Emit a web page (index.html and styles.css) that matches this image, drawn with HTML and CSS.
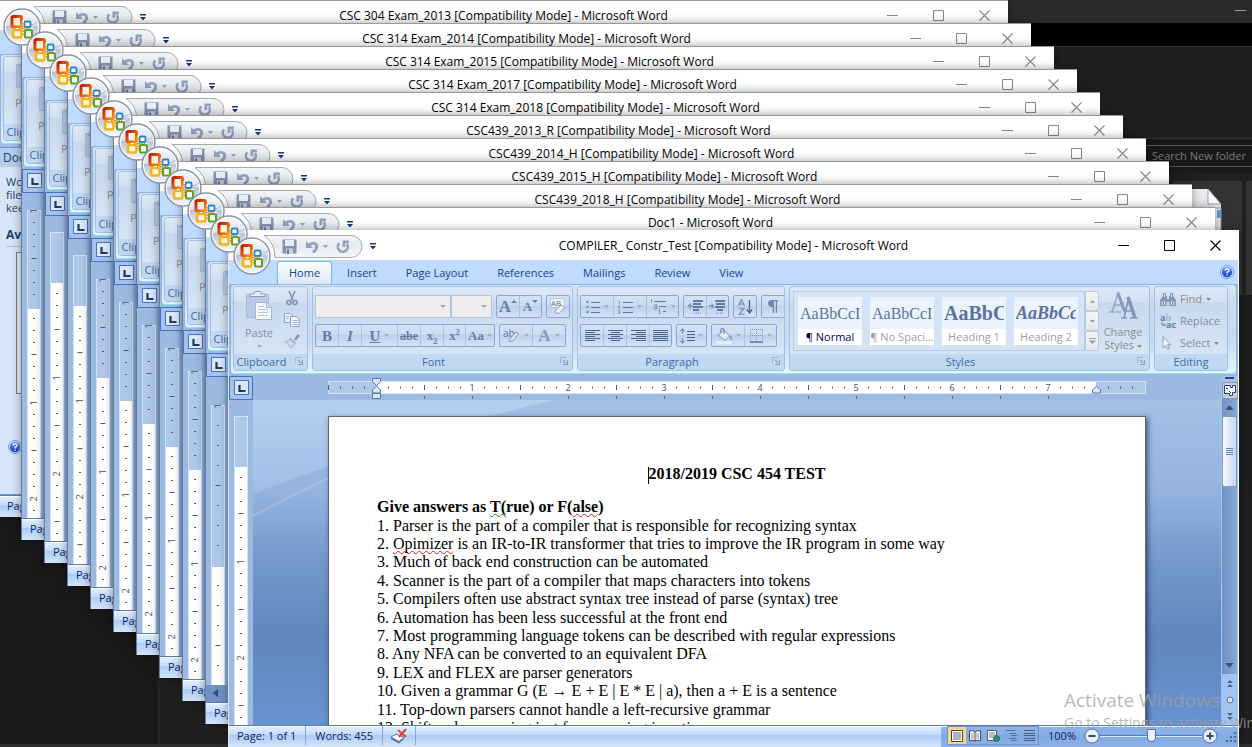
FILE: index.html
```html
<!DOCTYPE html>
<html lang="en">
<head>
<meta charset="utf-8">
<title>Microsoft Word</title>
<link rel="stylesheet" href="styles.css">
</head>
<body>
<svg class="defs" aria-hidden="true">
  <defs>
    <linearGradient id="g-orb" x1="0" y1="0" x2="0" y2="1">
      <stop offset="0" stop-color="#fafbfd"/><stop offset=".45" stop-color="#dde2ec"/>
      <stop offset=".5" stop-color="#bcc5d6"/><stop offset="1" stop-color="#fbfcff"/>
    </linearGradient>
    <linearGradient id="g-red" x1="0" y1="0" x2="1" y2="1">
      <stop offset="0" stop-color="#c01a00"/><stop offset="1" stop-color="#ff9a10"/>
    </linearGradient>
    <linearGradient id="g-pill" x1="0" y1="0" x2="0" y2="1">
      <stop offset="0" stop-color="#f1f4f7"/><stop offset=".5" stop-color="#e6ebf0"/><stop offset="1" stop-color="#f4f7fa"/>
    </linearGradient>
    <linearGradient id="g-help" x1="0" y1="0" x2="0" y2="1">
      <stop offset="0" stop-color="#5c95ff"/><stop offset="1" stop-color="#1238c0"/>
    </linearGradient>
    <symbol id="orb" viewBox="0 0 38 38">
      <circle cx="19" cy="19" r="18" fill="url(#g-orb)" stroke="#8b93a5" stroke-width="1.4"/>
      <circle cx="19" cy="19" r="16.6" fill="none" stroke="#fff" stroke-width="1"/>
      <path d="M3 20q8-5 16-3t16-3" fill="none" stroke="#a9b4c8" stroke-width=".8"/>
      <rect x="9" y="8.500" width="9.500" height="10.500" rx="1.500" fill="#fbeee6" stroke="url(#g-red)" stroke-width="3"/>
      <rect x="21.500" y="13.500" width="6" height="5.500" rx="1.200" fill="#fff" stroke="#1f86cf" stroke-width="1.800"/>
      <rect x="10" y="22" width="8.500" height="7.500" rx="1.500" fill="#fff6dc" stroke="#f5b21a" stroke-width="2.600"/>
      <rect x="22" y="22" width="7" height="7.500" rx="1.500" fill="#fff" stroke="#5fa22a" stroke-width="2.200"/>
      <path d="M20.200 12v19M13 20.500h17" stroke="#fff" stroke-width="1.200"/>
      <path d="M20.200 15v13M16 20.500h11" stroke="#e0872e" stroke-width="1.400" stroke-dasharray="1.500 1"/>
    </symbol>
    <symbol id="pill" viewBox="0 0 102 23">
      <path d="M3 .5H90a11 11 0 0 1 0 22H14Q14 8 3 .5z" fill="url(#g-pill)" stroke="#a9a9a9"/>
    </symbol>
    <symbol id="save" viewBox="0 0 15 15">
      <path d="M.5.5h14v14h-14z" fill="#8592b0"/><path d="M3 1h9v6H3z" fill="#e9eef6"/>
      <path d="M4 9.500h7V15H4z" fill="#c9d3e4"/><path d="M5 10.500h2V15H5z" fill="#65739a"/>
    </symbol>
    <symbol id="undo" viewBox="0 0 14 14">
      <path d="M1 1v7h7L5.700 5.800Q8.200 3.500 9.700 5.200 11.300 8 7 11.300l1.800 2Q14.800 9 12.600 4.200 9.500.2 3.400 3.500z" fill="#93a0bd"/>
    </symbol>
    <symbol id="redo" viewBox="0 0 14 14">
      <path d="M3.200 3.300A5 5 0 1 0 11 4" fill="none" stroke="#93a0bd" stroke-width="2.600"/><path d="M6.500.6h6.400v2.600H9.200V7H6.500z" fill="#93a0bd"/>
    </symbol>
    <symbol id="down" viewBox="0 0 5 3"><path d="M0 0h5L2.500 3z" fill="currentColor"/></symbol>
    <symbol id="custom" viewBox="0 0 6 7"><path d="M0 0h6v1.500H0zM0 3h6L3 6.500z" fill="#173a84"/></symbol>
    <symbol id="min" viewBox="0 0 11 11"><path d="M0 5.500h11" stroke="currentColor"/></symbol>
    <symbol id="max" viewBox="0 0 11 11"><path d="M.5.5h10v10H.5z" fill="none" stroke="currentColor"/></symbol>
    <symbol id="close" viewBox="0 0 11 11"><path d="M.5.5l10 10M10.500.5l-10 10" stroke="currentColor" stroke-width="1.100"/></symbol>
    <symbol id="help" viewBox="0 0 14 14">
      <circle cx="7" cy="7" r="6.500" fill="#e8f1ff" stroke="#6f95c8"/><circle cx="7" cy="7" r="5.200" fill="url(#g-help)"/>
      <path d="M5 5.600Q5.200 3.800 7 3.800t2 1.600Q9 6.400 7.100 7.300v1.200M7.100 9.600v1.200" fill="none" stroke="#fff" stroke-width="1.400"/>
    </symbol>
    <symbol id="paste" viewBox="0 0 28 30">
      <path d="M1.500 3.500h22v23h-22z" fill="#b9cae6" stroke="#a9bbd8"/><path d="M5 5.500h15V3h-4l-1-2.500h-5L9 3H5z" fill="#e6eef8" stroke="#8b9dbd"/>
      <path d="M10.500 11.500h11l5 5v12h-16z" fill="#f4f8fd" stroke="#a3b4d0"/><path d="M21.500 11.500v5h5" fill="#d4dfef" stroke="#a3b4d0"/>
      <path d="M13 15.500h6M13 18.500h10M13 21.500h10M13 24.500h10" stroke="#b4c6e2"/>
    </symbol>
    <symbol id="launch" viewBox="0 0 8 8"><path d="M.5 6V.5H6" fill="none" stroke="#9fb4d2"/><path d="M3 3l3 3M7.500 3v4.500H3" fill="none" stroke="#87a0c6" stroke-width="1.200"/></symbol>
    <symbol id="tabstop" viewBox="0 0 24 24">
      <path d="M.5.5h23v23H.5z" fill="#a6c2ea" stroke="#4472c4"/><path d="M5.500 4.500h14v14h-14z" fill="#dbe8fa" stroke="#4472c4"/>
      <path d="M10.500 9v6h6" fill="none" stroke="#22385c" stroke-width="2.200"/>
    </symbol>
  </defs>
</svg>

<div class="explorer">
  <div class="ex-title"><svg width="11" height="11"><use href="#min"/></svg></div>
  <div class="ex-black"></div>
  <div class="ex-ribbon"></div>
  <div class="ex-search"><div class="ex-box">Search New folder</div></div>
  <div class="ex-body">
    <div class="ex-side"></div>
    <div class="ex-main"><div class="ex-tile">
      <svg width="42" height="60" viewBox="0 0 42 60"><path d="M0 1h28l13 16v43H0z" fill="#e9ebf0"/><path d="M28 1v15h13z" fill="#fff" stroke="#9a9da5"/><path d="M30 20h11v40" fill="none" stroke="#8d96a8"/><path d="M37 22h4v8h-4z" fill="#58a5e0"/></svg>
    </div><div class="ex-tile2"></div></div>
  </div>
</div>

<main class="desktop" id="desktop">
  <template id="back">
    <section class="window back">
      <header class="titlebar">
        <svg class="orb" width="38" height="38"><use href="#orb"/></svg>
        <div class="qat"><svg class="pill" width="102" height="23"><use href="#pill"/></svg>
          <svg width="15" height="15"><use href="#save"/></svg><svg width="14" height="14"><use href="#undo"/></svg>
          <svg class="tri" width="5" height="3"><use href="#down"/></svg><svg width="14" height="14"><use href="#redo"/></svg>
          <svg class="cust" width="6" height="7"><use href="#custom"/></svg></div>
        <h2 class="caption"></h2>
        <div class="winbtns"><svg width="11" height="11"><use href="#min"/></svg><svg width="11" height="11"><use href="#max"/></svg><svg width="11" height="11"><use href="#close"/></svg></div>
      </header>
      <div class="tabs"></div>
      <div class="ribbon"><div class="group clipboard"><div class="gbody">
        <span class="big"><svg width="28" height="30"><use href="#paste"/></svg>Paste</span></div><div class="glabel launch">Clipboard</div></div></div>
      <div class="work"><div class="vcol"><svg width="24" height="24"><use href="#tabstop"/></svg><div class="vruler"></div></div></div>
      <footer class="status"><span>Page: 1 of 1</span></footer>
    </section>
  </template>

  <section class="window front">
    <header class="titlebar">
      <button class="orb" aria-label="Office Button"><svg width="38" height="38"><use href="#orb"/></svg></button>
      <div class="qat"><svg class="pill" width="102" height="23"><use href="#pill"/></svg>
        <button aria-label="Save"><svg width="15" height="15"><use href="#save"/></svg></button>
        <button aria-label="Undo"><svg width="14" height="14"><use href="#undo"/></svg></button>
        <button class="tri" aria-label="Undo list"><svg width="5" height="3"><use href="#down"/></svg></button>
        <button aria-label="Repeat"><svg width="14" height="14"><use href="#redo"/></svg></button>
        <button class="cust" aria-label="Customize"><svg width="6" height="7"><use href="#custom"/></svg></button></div>
      <h1 class="caption">COMPILER_ Constr_Test [Compatibility Mode] - Microsoft Word</h1>
      <div class="winbtns"><button aria-label="Minimize"><svg width="11" height="11"><use href="#min"/></svg></button><button aria-label="Maximize"><svg width="11" height="11"><use href="#max"/></svg></button><button aria-label="Close"><svg width="11" height="11"><use href="#close"/></svg></button></div>
    </header>
    <nav class="tabs">
      <button class="tab active">Home</button><button class="tab">Insert</button><button class="tab">Page Layout</button><button class="tab">References</button><button class="tab">Mailings</button><button class="tab">Review</button><button class="tab">View</button>
      <button class="helpbtn" aria-label="Help"><svg width="14" height="14"><use href="#help"/></svg></button>
    </nav>

    <div class="ribbon">
      <div class="group clipboard"><div class="gbody">
        <button class="big"><svg width="28" height="30"><use href="#paste"/></svg>Paste<svg class="arr" width="5" height="3"><use href="#down"/></svg></button>
        <div class="minis">
          <button aria-label="Cut"><svg width="12" height="15" viewBox="0 0 12 15"><path d="M3 0l4 9M9 0L5 9" stroke="#7f90b2" stroke-width="1.500"/><circle cx="3" cy="11.500" r="2" fill="none" stroke="#7f90b2" stroke-width="1.600"/><circle cx="9" cy="11.500" r="2" fill="none" stroke="#7f90b2" stroke-width="1.600"/></svg></button>
          <button aria-label="Copy"><svg width="16" height="14" viewBox="0 0 16 14"><path d="M.5.5h6l2 2v7h-8z" fill="#eaf1fa" stroke="#8fa2c4"/><path d="M6.500 3.500h6l2.500 2.500v7.500H6.500z" fill="#f4f8fd" stroke="#8fa2c4"/><path d="M2 3.500h3M2 5.500h3M8.500 7.500h5M8.500 9.500h5M8.500 11.500h5" stroke="#a5b7d6"/></svg></button>
          <button aria-label="Format Painter"><svg width="15" height="14" viewBox="0 0 15 14"><path d="M9 5l4-5 2 2-4 4.500z" fill="#8496b8"/><path d="M5 3.500l6.500 5-1.500 1.500-6-5z" fill="#a8b7d2"/><path d="M0 8q3 0 4.500-3l5.500 4.500q-1 3-4 4.500Q4 11 0 8z" fill="#c9d5e8" stroke="#93a5c4" stroke-width=".7"/></svg></button>
        </div></div>
        <div class="glabel launch">Clipboard<button aria-label="Clipboard options"><svg width="8" height="8"><use href="#launch"/></svg></button></div></div>

      <div class="group font"><div class="gbody rows">
        <div class="row">
          <div class="combos"><div class="combo wide"><select aria-label="Font" disabled></select></div><div class="combo"><select aria-label="Font Size" disabled></select></div></div>
          <div class="seg"><button class="w22 serif" aria-label="Grow Font"><b class="f16">A</b><i class="up"></i></button><button class="w22 serif" aria-label="Shrink Font"><b class="f13">A</b><i class="dn"></i></button></div>
          <div class="seg"><button class="w22" aria-label="Clear Formatting"><svg width="17" height="17" viewBox="0 0 17 17"><rect x=".5" y=".5" width="14" height="9" fill="#eef3fa" stroke="#b8c7df"/><text x="1" y="8" font-size="8" fill="#5f7095" font-family="Open Sans">AB</text><path d="M5 13l6-6 4 2.500-6 6q-4 0-4-2.500z" fill="#eaf0f8" stroke="#8b9cbc"/></svg></button></div>
        </div>
        <div class="row">
          <div class="seg"><button class="w22 serif"><b class="f14">B</b></button><button class="w24 serif"><em class="f14">I</em></button><button class="w40 serif"><u class="f14">U</u><svg width="5" height="3"><use href="#down"/></svg></button><button class="w24 serif"><s class="f12">abe</s></button><button class="w24 serif"><b class="f13">x<sub>2</sub></b></button><button class="w22 serif"><b class="f13">x<sup>2</sup></b></button><button class="w28 serif"><b class="f13">Aa</b><svg width="5" height="3"><use href="#down"/></svg></button></div>
          <div class="seg"><button class="w32" aria-label="Highlight"><svg width="17" height="14" viewBox="0 0 17 14"><text x="0" y="8" font-size="10" fill="#5f7095" font-family="Open Sans">ab</text><path d="M6 11l7-8 2.500 1.500L10 12l-3.500.5z" fill="#dfe8f5" stroke="#8192b3"/></svg><svg width="5" height="3"><use href="#down"/></svg></button><button class="w34 serif" aria-label="Font Color"><b class="f16 soft">A</b><svg width="5" height="3"><use href="#down"/></svg></button></div>
        </div></div>
        <div class="glabel launch">Font<button aria-label="Font options"><svg width="8" height="8"><use href="#launch"/></svg></button></div></div>

      <div class="group para"><div class="gbody rows">
        <div class="row">
          <div class="seg"><button class="w32" aria-label="Bullets"><svg width="14" height="14" viewBox="0 0 14 14"><path d="M5 2.500h9M5 7.500h9M5 12.500h9" stroke="#5f75a0"/><circle cx="1.500" cy="2" r="1.300" fill="#7d8fb2"/><circle cx="1.500" cy="7" r="1.300" fill="#7d8fb2"/><circle cx="1.500" cy="12" r="1.300" fill="#7d8fb2"/></svg><svg width="5" height="3"><use href="#down"/></svg></button><button class="w34" aria-label="Numbering"><svg width="15" height="14" viewBox="0 0 15 14"><path d="M5 2.500h10M5 7.500h10M5 12.500h10" stroke="#5f75a0"/><path d="M.5 1h1v3M0 6h2L.5 8.500H2M0 10.500h2v3H0M.5 12H2" fill="none" stroke="#7d8fb2" stroke-width=".8"/></svg><svg width="5" height="3"><use href="#down"/></svg></button><button class="w32" aria-label="Multilevel List"><svg width="17" height="16" viewBox="0 0 17 16"><path d="M4 2.500h12M9 7.500h7M13 12.500h3" stroke="#5f75a0"/><path d="M1.500 0v4M4 6h3v4H4V8h3M9.500 11v4M9.500 9.500v.8" fill="none" stroke="#7d8fb2"/></svg><svg width="5" height="3"><use href="#down"/></svg></button></div>
          <div class="seg"><button class="w22" aria-label="Decrease Indent"><svg width="17" height="14" viewBox="0 0 17 14"><path d="M6 1h10M6 4h8M6 7h10M6 10h6" stroke="#3f5a8c" stroke-width="1.500"/><path d="M7 13h8" stroke="#6b80a8" stroke-dasharray="1 1"/><path d="M0 6l4-3.500v2.500h2v2H4v2.500z" fill="#8b9cbc"/></svg></button><button class="w22" aria-label="Increase Indent"><svg width="17" height="14" viewBox="0 0 17 14"><path d="M6 1h10M7 4h9M6 7h10M8 10h6" stroke="#3f5a8c" stroke-width="1.500"/><path d="M7 13h8" stroke="#6b80a8" stroke-dasharray="1 1"/><path d="M5.500 6l-3-3.500v2.500H0v2h2.500v2.500z" fill="#8b9cbc"/></svg></button></div>
          <div class="seg"><button class="w22" aria-label="Sort"><svg width="15" height="16" viewBox="0 0 15 16"><path d="M.5 7L3.500.5 6.500 7M1.500 5h4M1 9.500h5L1 15.500h5.500" fill="none" stroke="#8496b8" stroke-width="1.300"/><path d="M11.500 1v12M9 10.500l2.500 3.500 2.500-3.500" fill="none" stroke="#4b628f" stroke-width="1.300"/></svg></button></div>
          <div class="seg"><button class="w22" aria-label="Show marks"><svg width="12" height="13" viewBox="0 0 12 13"><path d="M5 0h6v1.200h-1V13H8.800V1.200H7V13H5.800V7Q1 7 1 3.500T5 0z" fill="#6f82a8"/></svg></button></div>
        </div>
        <div class="row">
          <div class="seg"><button class="w22" aria-label="Align Left"><svg width="15" height="12" viewBox="0 0 15 12"><path d="M0 .5h15M0 2.500h10M0 4.500h15M0 6.500h10M0 8.500h15M0 10.500h10" stroke="#4b628f"/></svg></button><button class="w24" aria-label="Center"><svg width="15" height="12" viewBox="0 0 15 12"><path d="M0 .5h15M3 2.500h9M0 4.500h15M3 6.500h9M0 8.500h15M3 10.500h9" stroke="#4b628f"/></svg></button><button class="w24" aria-label="Align Right"><svg width="15" height="12" viewBox="0 0 15 12"><path d="M0 .5h15M5 2.500h10M0 4.500h15M5 6.500h10M0 8.500h15M5 10.500h10" stroke="#4b628f"/></svg></button><button class="w22" aria-label="Justify"><svg width="15" height="12" viewBox="0 0 15 12"><path d="M0 .5h15M0 2.500h15M0 4.500h15M0 6.500h15M0 8.500h15M0 10.500h15" stroke="#4b628f"/></svg></button></div>
          <div class="seg"><button class="w28" aria-label="Line Spacing"><svg width="15" height="16" viewBox="0 0 15 16"><path d="M7 3.500h8M7 6.500h8M7 9.500h8M7 12.500h8" stroke="#4b628f"/><path d="M2.500 1v5M2.500 10v5M.5 3l2-2 2 2M.5 13l2 2 2-2" fill="none" stroke="#8092b5" stroke-width="1.300"/></svg><svg width="5" height="3"><use href="#down"/></svg></button></div>
          <div class="seg"><button class="w32" aria-label="Shading"><svg width="16" height="16" viewBox="0 0 16 16"><path d="M2 7l6-5 6 6-5 4.500z" fill="#dfe8f4" stroke="#7f91b3"/><path d="M5 5V1q2-1.500 3 1v4M14 8q2 1 1 4" fill="none" stroke="#7f91b3" stroke-width="1.300"/><path d="M0 13h16v3H0z" fill="#e6edf7"/></svg><svg width="5" height="3"><use href="#down"/></svg></button><button class="w32" aria-label="Borders"><svg width="13" height="14" viewBox="0 0 13 14"><path d="M.5 0v13M6.500 0v13M12.500 0v13M0 .5h13M0 6.500h13" stroke="#7f91b3" stroke-dasharray="1 1"/><path d="M0 13h13" stroke="#5f75a0" stroke-width="1.500"/></svg><svg width="5" height="3"><use href="#down"/></svg></button></div>
        </div></div>
        <div class="glabel launch">Paragraph<button aria-label="Paragraph options"><svg width="8" height="8"><use href="#launch"/></svg></button></div></div>

      <div class="group styles"><div class="gbody">
        <div class="gallery">
          <button class="style"><span class="sample">AaBbCcI</span><span class="sname on">¶ Normal</span></button>
          <button class="style"><span class="sample">AaBbCcI</span><span class="sname">¶ No Spaci...</span></button>
          <button class="style"><span class="sample h1">AaBbC</span><span class="sname">Heading 1</span></button>
          <button class="style"><span class="sample h2">AaBbCc</span><span class="sname">Heading 2</span></button>
        </div>
        <div class="gscroll"><button aria-label="Row up"><svg class="flip" width="5" height="3"><use href="#down"/></svg></button><button aria-label="Row down"><svg width="5" height="3"><use href="#down"/></svg></button><button class="more" aria-label="More"><svg width="7" height="6" viewBox="0 0 7 6"><path d="M0 .5h7" stroke="currentColor"/><path d="M0 2.500h7L3.500 6z" fill="currentColor"/></svg></button></div>
        <button class="change"><svg width="30" height="28" viewBox="0 0 30 28"><path d="M1 21h6M8 21h5M4 21L10 2l5 17M6 14h8" fill="none" stroke="#98a9c6" stroke-width="1.600"/><path d="M10 2l7 19" stroke="#8b9dbd" stroke-width="3"/><path d="M13 27h6M22 27h8M16 27L21 6M17 20h8" fill="none" stroke="#8496b8" stroke-width="1.600"/><path d="M20 6l7 21" stroke="#8496b8" stroke-width="3.500"/></svg><span>Change<br>Styles <svg width="5" height="3"><use href="#down"/></svg></span></button>
        </div>
        <div class="glabel launch">Styles<button aria-label="Styles options"><svg width="8" height="8"><use href="#launch"/></svg></button></div></div>

      <div class="group editing"><div class="gbody">
        <button><svg width="16" height="13" viewBox="0 0 16 13"><path d="M3 0h3v3h1v3h2V3h1V0h3v3l3 4v6H9.500V9h-3v4H0V7l3-4z" fill="#8496b8"/><path d="M2 8v4M4.500 8v4M11.500 8v4M14 8v4M4.500 1v3M11.500 1v3" stroke="#dce6f3"/></svg>Find<svg width="5" height="3"><use href="#down"/></svg></button>
        <button><svg width="16" height="14" viewBox="0 0 16 14"><text x="0" y="7" font-size="9" font-weight="700" fill="#6b7fa6" font-family="Open Sans">a<tspan fill="#a9b8d3">b</tspan></text><text x="6" y="14" font-size="9" font-weight="700" fill="#6b7fa6" font-family="Open Sans">ac</text><path d="M2 8v3h3M4 9.500L5.500 11 4 12.500" fill="none" stroke="#6b7fa6"/></svg>Replace</button>
        <button><svg width="16" height="14" viewBox="0 0 16 14"><path d="M3 .5v11.500l2.700-2.500 2 4 1.800-1-2-3.800H11z" fill="#eef4fb" stroke="#8b9cbc"/></svg>Select<svg width="5" height="3"><use href="#down"/></svg></button>
        </div>
        <div class="glabel">Editing</div></div>
    </div>

    <div class="work">
      <div class="vcol"><svg width="24" height="24"><use href="#tabstop"/></svg><div class="vruler"></div></div>
      <div class="center">
        <div class="hrow"><div class="hruler" id="hruler"></div></div>
        <div class="canvas">
          <svg class="swoosh" viewBox="0 0 968 325" preserveAspectRatio="none" aria-hidden="true">
            <path d="M0 94Q140 40 300 0H968V325H0z" fill="#6f95cc" opacity=".25"/>
            <path d="M0 116Q120 50 250 20" fill="none" stroke="#c3d8f2" stroke-width="2" opacity=".35"/>
          </svg>
          <article class="page">
            <h2>2018/2019 CSC 454 TEST</h2>
            <h3>Give answers as <span class="green">T(</span>rue) or F(<span class="red">alse</span>)</h3>
            <div class="questions">
              <p>1. Parser is the part of a compiler that is responsible for recognizing syntax</p>
              <p>2. <span class="red">Opimizer</span> is an IR-to-IR transformer that tries to improve the IR program in some way</p>
              <p>3. Much of back end construction can be automated</p>
              <p>4. Scanner is the part of a compiler that maps characters into tokens</p>
              <p>5. Compilers often use abstract syntax tree instead of parse (syntax) tree</p>
              <p>6. Automation has been less successful at the front end</p>
              <p>7. Most programming language tokens can be described with regular expressions</p>
              <p>8. Any NFA can be converted to an equivalent DFA</p>
              <p>9. LEX and FLEX are parser generators</p>
              <p>10. Given a grammar G (E → E + E | E * E | a), then a + E is a sentence</p>
              <p>11. Top-down parsers cannot handle a left-recursive grammar</p>
              <p>12. Shift-reduce parsing just for reasoning in action</p>
            </div>
          </article>
        </div>
      </div>
      <div class="scroll">
        <div class="split"></div>
        <button class="rtoggle" aria-label="View Ruler"><svg width="12" height="11" viewBox="0 0 12 11"><path d="M.5.5h6v2h2v-2h3v7h-3v3h-3v-2h-5z" fill="#f4f8fd" stroke="#2c4470"/><path d="M2 3.500h2M5 6l2 2" stroke="#2c4470"/></svg></button>
        <div class="track"><button aria-label="Scroll up"><svg class="flip" width="9" height="5"><use href="#down"/></svg></button>
          <div class="thumb"><i></i><i></i><i></i><i></i></div>
          <button class="end" aria-label="Scroll down"><svg width="9" height="5"><use href="#down"/></svg></button></div>
        <div class="browse"><button aria-label="Previous Page"><svg class="flip" width="6" height="8" viewBox="0 0 6 8"><path d="M0 0h6L3 3zM0 4h6L3 7z" fill="#4a628f"/></svg></button><button aria-label="Browse Object"><svg width="8" height="8"><circle cx="4" cy="4" r="3" fill="#d9e4f3" stroke="#5b7099"/></svg></button><button aria-label="Next Page"><svg width="6" height="8" viewBox="0 0 6 8"><path d="M0 0h6L3 3zM0 4h6L3 7z" fill="#4a628f"/></svg></button></div>
      </div>
    </div>

    <footer class="status">
      <span>Page: 1 of 1</span><span class="words">Words: 455</span>
      <button class="proof" aria-label="Proofing"><svg width="18" height="16" viewBox="0 0 18 16"><path d="M1 9l5-3 8 3.500-5 4z" fill="#fff" stroke="#5573a8"/><path d="M1 9v2l8 4.500 5-4.500V9.500l-5 4z" fill="#4a76c0"/><path d="M8 2l8 7M16 1L9 9" stroke="#e2452c" stroke-width="2"/></svg></button>
      <div class="views">
        <button class="on" aria-label="Print Layout"><svg width="12" height="12" viewBox="0 0 12 12"><path d="M.5.5h11v11H.5z" fill="#fff" stroke="#444"/><path d="M2 3h8M2 5h8M2 7h8M2 9h8" stroke="#666"/></svg></button>
        <button aria-label="Reading"><svg width="12" height="12" viewBox="0 0 12 12"><path d="M.5 1Q4 0 6 2q2-2 5.500-1v9.500Q8 9.500 6 11 4 9.500.5 10.500zM6 2v9" fill="#fff" stroke="#445"/><path d="M2 4h3M2 6h3M7 4h3M7 6h3M2 8h3M7 8h3" stroke="#778" stroke-width=".8"/></svg></button>
        <button aria-label="Web Layout"><svg width="13" height="12" viewBox="0 0 13 12"><path d="M.5.5h9v10h-9z" fill="#fff" stroke="#556"/><path d="M2 3h6M2 5h6M2 7h4" stroke="#778"/><circle cx="9.500" cy="8.500" r="3" fill="#3b8f58" stroke="#225cab"/></svg></button>
        <button aria-label="Outline"><svg width="11" height="11" viewBox="0 0 11 11"><path d="M0 .5h9M3 3.500h7M5 5.500h6M3 8.500h7M5 10.500h6" stroke="#56719f"/></svg></button>
        <button aria-label="Draft"><svg width="11" height="11" viewBox="0 0 11 11"><path d="M0 .5h11M0 3.500h11M0 5.500h11M0 8.500h11M0 10.500h11" stroke="#4b5e80"/></svg></button>
      </div>
      <button class="pct">100%</button>
      <div class="zoom"><button class="round" aria-label="Zoom Out"><svg width="16" height="16" viewBox="0 0 16 16"><circle cx="8" cy="8" r="7" fill="#e8f0fa" stroke="#51709f"/><path d="M4.500 8h7" stroke="#31496f" stroke-width="2"/></svg></button>
        <input type="range" min="0" max="200" value="100" aria-label="Zoom">
        <button class="round" aria-label="Zoom In"><svg width="16" height="16" viewBox="0 0 16 16"><circle cx="8" cy="8" r="7" fill="#e8f0fa" stroke="#51709f"/><path d="M4.500 8h7M8 4.500v7" stroke="#31496f" stroke-width="2"/></svg></button></div>
      <svg class="grip" width="12" height="12" viewBox="0 0 12 12"><path d="M9 1h2M5 5h2M9 5h2M1 9h2M5 9h2M9 9h2" stroke="#4a6a9f" stroke-width="2"/></svg>
    </footer>
  </section>
</main>

<aside class="watermark"><strong>Activate Windows</strong><span>Go to Settings to activate Windows.</span></aside>
<script src="script.js"></script>
</body>
</html>
```

FILE: styles.css
```css
* { box-sizing: border-box; }
body {
  margin: 0; height: 100vh; overflow: hidden; position: relative; background: #191919;
  font: 11px/16px "Open Sans", "Noto Sans", sans-serif; color: #15428b;
}
button { border: 0; padding: 0; margin: 0; background: none; font: inherit; color: inherit; display: flex; align-items: center; justify-content: center; }
svg { display: block; flex: none; }
h1, h2, h3, p { margin: 0; font: inherit; }
.defs { position: absolute; width: 0; height: 0; }
.flip { rotate: 180deg; }

/* File manager behind the documents */
.explorer { position: absolute; inset: 0; display: flex; flex-direction: column; border-bottom: 3px solid #2f2f2f; }
.ex-title { height: 23px; background: #2b2b2b; color: #999; display: flex; justify-content: flex-end; padding: 5px 6px; }
.ex-black { height: 23px; background: #000; }
.ex-ribbon { height: 93px; background: #202020; border-block: 1px solid #333; }
.ex-search { height: 34px; background: #191919; padding: 6px 0; display: flex; justify-content: flex-end; }
.ex-box { width: 142px; padding-left: 41px; border: 1px solid #555; border-right: 0; color: #7b7b7b; font-size: 11px; line-height: 20px; white-space: nowrap; }
.ex-body { flex: 1; display: flex; }
.ex-side { width: 159px; background: #191919; border-right: 1px solid #2b2b2b; }
.ex-main { flex: 1; background: linear-gradient(#202020 122px, #1c1c1c 122px, #202020); display: flex; justify-content: flex-end; gap: 4px; padding-top: 8px; }
.ex-tile { width: 70px; height: 114px; background: #333; padding: 7px 8px; }
.ex-tile2 { width: 6px; height: 114px; background: #333; }

/* Windows */
.desktop { position: absolute; inset: 0; }
.window { position: absolute; display: flex; flex-direction: column; background: #9cb9e1; box-shadow: 0 0 9px rgba(0,0,0,.38); }
.back { width: calc(100vw - 242px); height: calc(100vh - 230px); border-top: 1px solid #999; border-left: 1px solid #6a7b98; }
.front { left: 228px; top: 230px; right: 13px; bottom: 0; border-left: 1px solid #dbe7f8; border-right: 1px solid #fff; }
.titlebar { height: 30px; flex: none; background: #fff; position: relative; display: flex; align-items: center; justify-content: center; padding-top: 2px; color: #000; }
.back .titlebar { height: 29px; padding-top: 1px; color: #888; }
.orb { position: absolute; left: 4px; top: 7px; z-index: 1; }
.qat { position: absolute; left: 32px; top: 5px; height: 23px; display: flex; align-items: center; gap: 8px; padding-left: 21px; }
.pill { position: absolute; left: 0; top: 0; }
.qat > :not(.pill) { position: relative; }
.qat .tri { color: #999fa9; margin-left: -4px; }
.qat .cust { margin-left: 12px; }
.caption { font-size: 12px; color: #000; white-space: nowrap; }
.winbtns { position: absolute; right: 17px; top: 10px; display: flex; gap: 35px; }
.back .winbtns { top: 9px; right: 18px; }
.tabs { height: 24px; flex: none; background: #bfdbff; display: flex; padding-left: 48px; gap: 1px; align-items: flex-end; }
.tab { height: 23px; padding: 0 14px; white-space: nowrap; }
.tab.active { padding: 0 11px; background: linear-gradient(#fbfdff, #dce9f8); border: 1px solid #8db2e3; border-bottom: 0; border-radius: 3px 3px 0 0; box-shadow: 0 0 2px #7ee; }
.helpbtn { margin-left: auto; margin-right: 4px; align-self: center; }

/* Ribbon */
.ribbon { height: 90px; flex: none; margin: 0 1px; padding: 1px 2px 2px; display: flex; gap: 4px; border: 1px solid #8db2e3; border-bottom-color: #8fe6ee; border-radius: 4px; background: linear-gradient(#dbe7f5, #c9daee 20%, #c5d9ef 60%, #e3f4ff); }
.group { display: flex; flex-direction: column; border: 1px solid #9fbfe4; border-radius: 3px; background: linear-gradient(#dde8f5, #d2e0f1 18%, #c7d8ed 19%, #d8e7f6 90%); overflow: hidden; flex: none; }
.clipboard { width: 75px; } .font { width: 261px; } .para { width: 208px; } .styles { width: 361px; } .editing { width: 74px; }
.gbody { flex: 1; display: flex; padding: 4px 2px 3px; color: #8b8d90; }
.glabel { height: 16px; background: #c2d8f0; color: #3e6aaa; text-align: center; position: relative; line-height: 15px; white-space: nowrap; }
.glabel button { position: absolute; right: 4px; top: 3px; }
.glabel.launch { padding-right: 18px; }
.big { display: flex; flex-direction: column; justify-content: flex-start; align-items: center; width: 46px; gap: 4px; color: #8b8d90; }
.big .arr { color: #a8adb5; }
.minis { display: flex; flex-direction: column; justify-content: space-between; align-items: center; width: 20px; padding-bottom: 3px; }
.rows { flex-direction: column; gap: 6px; padding-top: 8px; }
.row { display: flex; gap: 4px; }
.seg { display: flex; height: 23px; border: 1px solid #86a7d8; border-radius: 2px; background: linear-gradient(#d3e1f4, #cbdbf1 45%, #bccfea 48%, #d3e3f6); color: #a8adb5; }
.seg button { gap: 4px; border-left: 1px solid #a9c1e2; }
.seg button:first-child { border-left: 0; }
.w22 { width: 22px; } .w24 { width: 23px; } .w28 { width: 29px; } .w32 { width: 32px; } .w34 { width: 33px; } .w40 { width: 36px; }
.seg .w22, .seg .w24 { gap: 0; }
.seg .w28 { gap: 3px; }
.serif { font-family: "Liberation Serif", serif; color: #a8adb5; }
.serif b, .serif em, .serif u, .serif s { color: #687ba1; font-weight: 700; }
.serif .soft { color: #8698ba; }
.serif sub, .serif sup { font-size: 8px; line-height: 0; }
.f12 { font-size: 12px; } .f13 { font-size: 13px; } .f14 { font-size: 15px; } .f16 { font-size: 17px; }
.up, .dn { align-self: flex-start; margin-top: 4px; border: 3px solid transparent; border-top-width: 0; border-bottom-color: #6a7ea6; }
.dn { border-top: 3px solid #6a7ea6; border-bottom: 0; }
.combos { display: flex; height: 23px; width: 179px; }
.combo { flex: 1; position: relative; display: flex; border: 1px solid #b4c5da; background: #ededed; }
.combo.wide { flex: 0 0 136px; }
.combo select { width: 100%; border: 0; appearance: none; background: transparent; }
.combo::after { content: ""; position: absolute; right: 4px; top: 9px; border: 3px solid transparent; border-top-color: #a5a5a5; border-bottom: 0; }
.gallery { display: flex; gap: 8px; padding: 5px 4px; width: 292px; height: 60px; margin-left: 1px; border: 1px solid #b5cce9; background: #d4e4f6; }
.style { width: 64px; height: 48px; flex-direction: column; align-items: stretch; overflow: hidden; background: #ebf3ff; }
.sample { height: 32px; overflow: hidden; margin: 0 2px; text-align: left; font: 16px/33px "Liberation Serif", serif; color: #5c729c; white-space: nowrap; }
.h1 { font-size: 20px; font-weight: 700; }
.h2 { font-size: 18px; font-weight: 700; font-style: italic; }
.sname { height: 16px; background: #fff; color: #a0a0a0; line-height: 15px; white-space: nowrap; }
.sname.on { color: #00005c; }
.gscroll { width: 14px; height: 60px; display: flex; flex-direction: column; color: #9a9fa8; }
.gscroll button { flex: 1; border: 1px solid #b7c9e0; background: linear-gradient(#f4f4f4, #e4e7eb); border-radius: 2px; }
.change { flex: 1; flex-direction: column; justify-content: flex-start; gap: 6px; line-height: 13px; }
.change span svg { display: inline-block; vertical-align: middle; }
.editing .gbody { flex-direction: column; justify-content: space-between; padding: 2px 4px 1px 5px; }
.editing .gbody button { justify-content: flex-start; gap: 4px; height: 20px; }

/* Rulers and document */
.work { flex: 1; min-height: 0; display: flex; padding-top: 2px; background: #9cb9e1; position: relative; }
.vcol { width: 24px; display: flex; flex-direction: column; flex: none; }
.vruler { flex: 1; min-height: 0; overflow: hidden; position: relative; }
.back .work { background: linear-gradient(90deg, #9cb9e1 18px, #7f9fcf 22px); }
.rnum { font: 9px "Open Sans", sans-serif; fill: #4b4f57; text-anchor: middle; }
.center { flex: 1; min-width: 0; display: flex; flex-direction: column; }
.hrow { height: 24px; flex: none; display: flex; justify-content: center; }
.hruler { width: 818px; flex: none; }
.canvas { flex: 1; min-height: 0; overflow: hidden; position: relative; display: flex; justify-content: center; background: linear-gradient(#b5cfee, #a0bfe6 28%, #7599ca 50%, #5a83b8 73%, #6693d4); }
.swoosh { position: absolute; inset: 0; width: 100%; height: 100%; }
.page { position: relative; width: 818px; height: 1058px; flex: none; margin-top: 16px; padding: 48px; background: #fff; border: 1px solid #5d6673; box-shadow: 2px 2px 5px rgba(20,40,80,.7); color: #000; font: 16px/18px "Liberation Serif", serif; }
.page h2 { text-align: center; font-weight: 700; }
.page h2::before { content: ""; display: inline-block; width: 1px; height: 17px; margin-right: -1px; vertical-align: middle; background: #000; }
.page h3 { font-weight: 700; margin-top: 14px; }
.page p { white-space: nowrap; }
.page p:nth-child(5n+1), .page p:nth-child(5n+4) { line-height: 19px; }
.red, .green { text-decoration: underline wavy #d22 1px; text-decoration-skip-ink: none; text-underline-offset: 1px; }
.green { text-decoration-color: #1a8a2a; }
.scroll { width: 17px; flex: none; display: flex; flex-direction: column; align-items: center; background: #a3c3f0; color: #3c4e75; }
.split { width: 9px; height: 2px; margin: 1px 0 3px; background: #33466e; flex: none; }
.rtoggle { width: 16px; height: 17px; flex: none; border: 1px solid #8c96aa; background: #c6cfdd; }
.track { flex: 1; align-self: stretch; margin: 0 1px; display: flex; flex-direction: column; background: linear-gradient(90deg, #6f92c4, #8aa8d4); }
.track button { height: 17px; flex: none; }
.track .end { margin-top: auto; }
.thumb { height: 71px; border: 1px solid #7f9ac6; border-radius: 2px; background: linear-gradient(90deg, #f5f9ff, #c3d6f0); display: flex; flex-direction: column; justify-content: center; align-items: center; gap: 1px; }
.thumb i { width: 7px; height: 1px; background: #6985b5; }
.browse { height: 51px; display: flex; flex-direction: column; justify-content: space-around; align-items: center; }

/* Status bar */
.status { height: 22px; flex: none; display: flex; align-items: center; padding-bottom: 2px; border-top: 1px solid #567db1; box-shadow: inset 0 1px #fff; background: linear-gradient(#e3efff, #c4dcff 40%, #aaccf6 45%, #d5e5fa); color: #15206b; }
.status span { padding: 0 9px 0 8px; line-height: 19px; border-right: 1px solid #86a9dc; white-space: nowrap; }
.status .words { padding-left: 9px; }
.back .status span { border: 0; }
.proof { width: 33px; height: 19px; border-right: 1px solid #86a9dc; }
.views { margin-left: auto; display: flex; height: 19px; border: 1px solid #6f92c8; }
.views button { width: 18px; }
.views .on { background: #fbd58a; }
.pct { padding: 0 8px 0 9px; align-self: stretch; }
.front .status { background: linear-gradient(90deg, transparent calc(100% - 297px), rgba(110,155,220,.7) calc(100% - 297px)), linear-gradient(#e3efff, #c4dcff 40%, #aaccf6 45%, #d5e5fa); }
.zoom { display: flex; align-items: center; width: 134px; }
.zoom input { appearance: none; flex: 1; min-width: 0; height: 14px; margin: 0; background: linear-gradient(transparent 6px, #5877aa 6px 7px, #dce8f8 7px 8px, transparent 8px); }
.zoom input::-webkit-slider-thumb { appearance: none; width: 9px; height: 13px; background: #eaf2fc; border: 1px solid #4d6ea4; border-radius: 1px 1px 5px 5px; }
.grip { margin: 4px 1px 0 7px; }

/* Recovery pane */
.pane { flex: 1; margin-top: 1px; background: #d6e5f7; border: 1px solid #7398c8; color: #1e3c70; display: flex; flex-direction: column; min-height: 0; overflow: hidden; }
.pane > * { width: 200px; flex: none; }
.pane h3 { padding: 0 3px; height: 19px; line-height: 19px; font-size: 12px; background: #b4cdec; }
.pane p { padding: 8px 6px; line-height: 13px; height: 60px; }
.pane h4 { margin: 0 6px; font-size: 12px; border-bottom: 1px solid #a9c3e6; height: 20px; }
.pane .list { margin-left: 16px; height: 142px; margin-top: 5px; border: 1px solid #777; background: #e5eefa; }
.pane svg { margin: 46px 0 0 8px; width: 14px; }
.hbar { position: absolute; left: 0; bottom: 0; width: 100%; height: 17px; background: #6f92c4; color: #3c4e75; padding: 5px; }
.hbar svg { rotate: 90deg; }

.watermark { position: absolute; right: 0; bottom: 15px; width: 188px; overflow: hidden; color: rgba(160,160,160,.75); display: flex; flex-direction: column; white-space: nowrap; pointer-events: none; }
.watermark strong { font: 400 19px/25px "Open Sans", sans-serif; }
.watermark span { font-size: 14px; line-height: 19px; }
```

FILE: script.js
```js
const NS = 'http://www.w3.org/2000/svg';

// Vertical ruler: box top, origin of the inch scale, end of margin, inch length
const RULERS = {
  wide: { top: 187, origin: 284, white: 286, unit: 96 },
  small: { top: 186, origin: 236, white: 237, unit: 96 },
  doc: { top: 198, origin: 359, white: 360, unit: 160 },
};
const RULER_START = 170;

function verticalRuler(host, kind) {
  const r = RULERS[kind];
  const y = v => v - RULER_START;
  let s = `<rect x="5.5" y="${y(r.top) + .5}" width="13" height="900" fill="#afc8ea" stroke="#d3e2f6"/>` +
    `<rect x="6" y="${y(r.white)}" width="12" height="900" fill="#fff"/>`;
  const step = r.unit / 8;
  for (let k = -8; k <= 24; k++) {
    const v = y(r.origin + k * step);
    if (k === 0 || v < y(r.top) || (kind === 'small' && k < 0)) continue;
    if (k % 8 === 0) {
      s += `<text class="rnum" transform="translate(15 ${v}) rotate(-90)">${Math.abs(k / 8)}</text>`;
    } else {
      const w = k % 4 === 0 ? 5 : 2;
      s += `<path d="M${12 - w / 2} ${v - .5}h${w}" stroke="#555c68"/>`;
    }
  }
  host.innerHTML = `<svg xmlns="${NS}" width="24" height="900">${s}</svg>`;
}

function horizontalRuler(host) {
  let s = '<rect x=".5" y="5.5" width="817" height="12" fill="#afc8ea" stroke="#d3e2f6"/><rect x="48" y="6" width="720" height="11" fill="#fff"/>';
  for (let k = -4; k <= 63; k++) {
    const x = 48 + k * 12;
    if (k === 0 || k === 60) continue;
    if (k > 0 && k % 8 === 0) s += `<text class="rnum" x="${x}" y="15">${k / 8}</text>`;
    else {
      const h = k % 4 === 0 ? 5 : 2;
      s += `<path d="M${x + .5} ${11.5 - h / 2}v${h}" stroke="#555c68"/>`;
    }
    if (k > 0 && k < 60 && k % 4 === 0) s += `<path d="M${x + .5} 20v3" stroke="#667"/>`;
  }
  s += '<path d="M44.500 2.500h8v3l-4 4-4-4zM44.500 17v-3l4-4 4 4v3zM44.500 17.500h8v5h-8z" fill="#dbe7f8" stroke="#5876ab"/>' +
    '<path d="M764.500 17v-3l4-4 4 4v3z" fill="#dbe7f8" stroke="#5876ab"/>';
  host.innerHTML = `<svg xmlns="${NS}" width="818" height="24">${s}</svg>`;
}

const documents = [
  ['CSC 304 Exam_2013 [Compatibility Mode]', null],
  ['CSC 314 Exam_2014 [Compatibility Mode]', 'wide'],
  ['CSC 314 Exam_2015 [Compatibility Mode]', 'small'],
  ['CSC 314 Exam_2017 [Compatibility Mode]', 'small'],
  ['CSC 314 Exam_2018 [Compatibility Mode]', 'wide'],
  ['CSC439_2013_R [Compatibility Mode]', 'wide'],
  ['CSC439_2014_H [Compatibility Mode]', 'wide'],
  ['CSC439_2015_H [Compatibility Mode]', 'wide'],
  ['CSC439_2018_H [Compatibility Mode]', 'wide'],
  ['Doc1', 'doc'],
];

const desktop = document.getElementById('desktop');
const front = desktop.querySelector('.front');
const template = document.getElementById('back');
const CASCADE = 23;

documents.forEach(([name, kind], i) => {
  const win = template.content.firstElementChild.cloneNode(true);
  win.style.left = `${i * CASCADE - 2}px`;
  win.style.top = `${i * CASCADE}px`;
  win.querySelector('.caption').textContent = `${name} - Microsoft Word`;
  const work = win.querySelector('.work');
  if (kind) {
    verticalRuler(work.querySelector('.vruler'), kind);
  } else {
    work.innerHTML = '<div class="pane"><h3>Document Recovery</h3><p>Word has recovered the following files. Save the ones you wish to keep.</p><h4>Available files</h4><div class="list"></div><svg width="14" height="14"><use href="#help"/></svg></div>';
  }
  if (kind === 'doc') work.insertAdjacentHTML('beforeend', '<div class="hbar"><svg width="9" height="6"><use href="#down"/></svg></div>');
  desktop.insertBefore(win, front);
});

verticalRuler(front.querySelector('.vruler'), 'small');
horizontalRuler(document.getElementById('hruler'));
```
